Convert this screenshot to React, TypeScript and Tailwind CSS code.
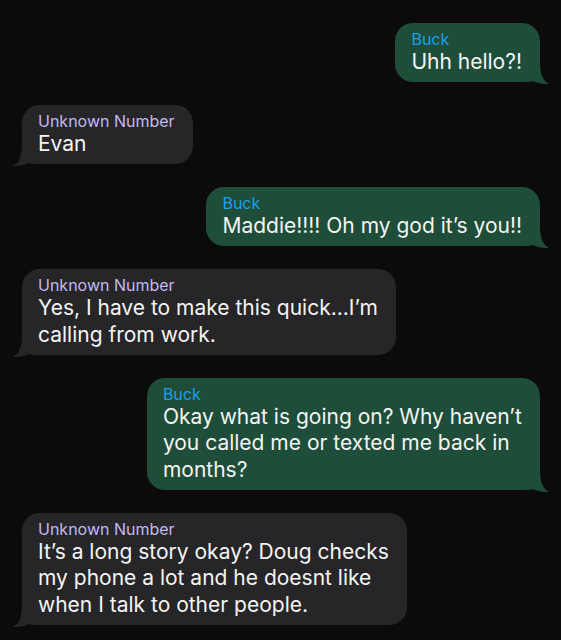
import React from 'react';

type Msg = { from: 'me' | 'them'; lines: string[] };

const messages: Msg[] = [
  { from: 'me', lines: ['Uhh hello?!'] },
  { from: 'them', lines: ['Evan'] },
  { from: 'me', lines: ['Maddie!!!! Oh my god it\u2019s you!!'] },
  { from: 'them', lines: ['Yes, I have to make this quick...I\u2019m', 'calling from work.'] },
  { from: 'me', lines: ['Okay what is going on? Why haven\u2019t', 'you called me or texted me back in', 'months?'] },
  {
    from: 'them',
    lines: ['It\u2019s a long story okay? Doug checks', 'my phone a lot and he doesnt like', 'when I talk to other people.'],
  },
];

// iMessage-style tail drawn over the bottom corner of the bubble
const Tail: React.FC<{ side: 'left' | 'right'; color: string }> = ({ side, color }) => (
  <svg
    width="24"
    height="24"
    viewBox="0 0 24 24"
    className={`absolute bottom-[-3px] ${side === 'right' ? 'right-[-10px]' : 'left-[-10px] -scale-x-100'}`}
  >
    <path d="M0 0 H14 C14 12 16 19 23 23 C18 23.5 11 22 7 20 C5 21 2 21 0 21 Z" fill={color} />
  </svg>
);

const Bubble: React.FC<{ msg: Msg }> = ({ msg }) => {
  const mine = msg.from === 'me';
  const color = mine ? '#1e4d3a' : '#262628';
  return (
    <div className={`flex ${mine ? 'justify-end pr-[21px]' : 'justify-start pl-[22px]'}`}>
      <div
        className={`relative rounded-[18px] pl-[16px] pr-[18px] pt-[6px] pb-[6.5px] ${
          mine ? 'bg-[#1e4d3a]' : 'bg-[#262628]'
        }`}
      >
        <Tail side={mine ? 'right' : 'left'} color={color} />
        <div className={`relative text-[16px] leading-5 ${mine ? 'text-[#1ba0e8]' : 'text-[#c4b7f2]'}`}>
          {mine ? 'Buck' : 'Unknown Number'}
        </div>
        <div className="relative text-[21px] leading-[26.5px] text-[#f4f4f4]">
          {msg.lines.map((l, i) => (
            <div key={i} className="whitespace-nowrap">
              {l}
            </div>
          ))}
        </div>
      </div>
    </div>
  );
};

export default function App() {
  return (
    <div
      className="min-h-[640px] w-full bg-[#0b0b0b] pt-[23px] flex flex-col gap-[23px]"
      style={{ fontFamily: 'Inter, "Liberation Sans", Arial, sans-serif' }}
    >
      {messages.map((m, i) => (
        <Bubble key={i} msg={m} />
      ))}
    </div>
  );
}
